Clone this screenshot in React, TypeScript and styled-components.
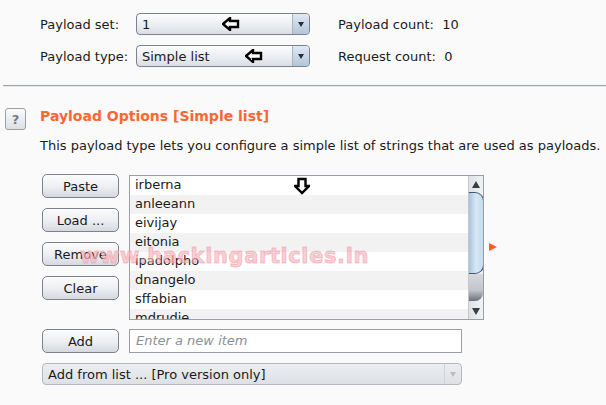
import React from "react";
import styled, { createGlobalStyle } from "styled-components";

const GlobalStyle = createGlobalStyle`
  html, body {
    margin: 0;
    padding: 0;
    background: #fafafa;
  }
  body {
    font-family: "DejaVu Sans", Verdana, sans-serif;
    font-size: 13px;
    color: #1a1a1a;
  }
`;

const Page = styled.div`
  position: relative;
  width: 606px;
  height: 405px;
  overflow: hidden;
  background: #fafafa;
`;

const TopGrid = styled.div`
  display: grid;
  grid-template-columns: 96px 174px auto;
  row-gap: 10px;
  padding: 13px 0 0 40px;
  align-items: center;
`;

const Label = styled.div<{ $count?: boolean }>`
  white-space: nowrap;
  padding-left: ${(p) => (p.$count ? "28px" : "0")};
`;

const Combo = styled.div<{ $disabled?: boolean }>`
  position: relative;
  display: flex;
  align-items: center;
  height: 22px;
  box-sizing: border-box;
  border: 1px solid ${(p) => (p.$disabled ? "#b4b8c2" : "#7c818c")};
  border-radius: 4px;
  background: ${(p) =>
    p.$disabled
      ? "linear-gradient(#eceef1, #dde0e5)"
      : "linear-gradient(#fdfdfe, #e9ecf0 60%, #dadde3)"};
  color: #1a1a1a;
  overflow: hidden;
`;

const ComboText = styled.div`
  flex: 1;
  padding-left: 5px;
  white-space: nowrap;
`;

const ComboArrow = styled.div<{ $disabled?: boolean }>`
  width: 16px;
  align-self: stretch;
  display: flex;
  align-items: center;
  justify-content: center;
  border-left: 1px solid ${(p) => (p.$disabled ? "#d0d3d9" : "#a4b3c6")};
  background: ${(p) =>
    p.$disabled ? "transparent" : "linear-gradient(#e2e9f2, #b3c5da)"};
  &::after {
    content: "";
    border-left: 3.5px solid transparent;
    border-right: 3.5px solid transparent;
    border-top: 5px solid ${(p) => (p.$disabled ? "#b9bcc3" : "#2a2e36")};
  }
`;

const Separator = styled.div`
  margin: 18px 0 0 3px;
  border-top: 1px solid #9fa3ae;
  height: 1px;
  background: #e6e7ea;
`;

const Section = styled.div`
  display: grid;
  grid-template-columns: 35px 1fr;
  padding: 18px 0 0 5px;
`;

const HelpIcon = styled.div`
  width: 21px;
  height: 22px;
  box-sizing: border-box;
  border: 1px solid #9a9ea8;
  border-radius: 3px;
  background: linear-gradient(#fbfbfc, #dcdfe4);
  color: #777b84;
  font-weight: bold;
  font-size: 13px;
  display: flex;
  align-items: center;
  justify-content: center;
  margin-top: 3px;
`;

const Title = styled.div`
  color: #ff6633;
  font-weight: bold;
  font-size: 14px;
  line-height: 18px;
  margin-top: 2px;
`;

const Description = styled.div`
  grid-column: 2;
  margin-top: 8px;
  white-space: nowrap;
`;

const Body = styled.div`
  display: flex;
  gap: 10px;
  padding: 21px 0 0 42px;
`;

const ButtonColumn = styled.div`
  display: flex;
  flex-direction: column;
  gap: 10px;
`;

const Button = styled.div`
  width: 77px;
  height: 24px;
  box-sizing: border-box;
  border: 1px solid #7d818b;
  border-radius: 5px;
  background: linear-gradient(#fcfcfd, #eceef1 55%, #d5d8de);
  display: flex;
  align-items: center;
  justify-content: center;
`;

const ListBox = styled.div`
  position: relative;
  margin-top: 1px;
  width: 355px;
  height: 145px;
  box-sizing: border-box;
  border: 1px solid #9a9ea8;
  background: #fff;
  display: flex;
  overflow: hidden;
`;

const Rows = styled.div`
  flex: 1;
  overflow: hidden;
`;

const Row = styled.div<{ $alt: boolean }>`
  height: 19px;
  line-height: 18px;
  padding-left: 5px;
  background: ${(p) => (p.$alt ? "#f2f2f2" : "#ffffff")};
`;

const ScrollBar = styled.div`
  width: 14px;
  border-left: 1px solid #c4c7cd;
  background: linear-gradient(90deg, #dfe1e5, #f1f2f4);
  display: flex;
  flex-direction: column;
`;

const ScrollBtn = styled.div<{ $down?: boolean }>`
  height: 16px;
  display: flex;
  align-items: center;
  justify-content: center;
  &::after {
    content: "";
    border-left: 4px solid transparent;
    border-right: 4px solid transparent;
    ${(p) =>
      p.$down
        ? "border-top: 7px solid #3a3d44;"
        : "border-bottom: 7px solid #3a3d44;"}
  }
`;

const Thumb = styled.div`
  height: 82px;
  margin-right: -1px;
  box-sizing: border-box;
  border: 1px solid #3f5a78;
  border-left: none;
  border-radius: 0 9px 9px 0;
  background: linear-gradient(90deg, #a8c3dd, #d8e8f5 50%, #c4dbee);
`;

const Track = styled.div`
  flex: 1;
  background: linear-gradient(#d6d8dc, #c2c5cb 60%, #6c6f76);
  border-radius: 0 0 8px 0;
  margin-bottom: 2px;
`;

const Marker = styled.div`
  align-self: center;
  margin-left: -5px;
  margin-top: -1px;
  width: 0;
  height: 0;
  border-top: 4px solid transparent;
  border-bottom: 4px solid transparent;
  border-left: 8px solid #ff5c26;
`;

const AddRow = styled.div`
  display: flex;
  gap: 10px;
  padding: 9px 0 0 42px;
`;

const Input = styled.div`
  width: 333px;
  height: 24px;
  box-sizing: border-box;
  border: 1px solid #9a9ea8;
  background: #fff;
  color: #8b8f97;
  font-style: italic;
  padding-left: 6px;
  line-height: 22px;
`;

const FromList = styled.div`
  padding: 10px 0 0 42px;
  width: 462px;
  box-sizing: border-box;
`;

const Watermark = styled.div`
  position: absolute;
  left: 80px;
  top: 244px;
  font-family: "DejaVu Sans", Verdana, sans-serif;
  font-weight: bold;
  font-size: 21px;
  color: rgba(248, 186, 194, 0.7);
  -webkit-text-stroke: 1px rgba(240, 140, 152, 0.45);
  pointer-events: none;
  letter-spacing: 0.6px;
`;

const Pointer = styled.svg`
  position: absolute;
`;

const LeftArrow = ({ x, y }: { x: number; y: number }) => (
  <Pointer width="18" height="14" viewBox="0 0 18 14" style={{ left: x, top: y }}>
    <path
      d="M1 7 L8 1 L8 4 L16 4 L16 10 L8 10 L8 13 Z"
      fill="#fff"
      stroke="#000"
      strokeWidth="2.4"
      strokeLinejoin="miter"
    />
  </Pointer>
);

const DownArrow = ({ x, y }: { x: number; y: number }) => (
  <Pointer width="16" height="18" viewBox="0 0 16 18" style={{ left: x, top: y }}>
    <path
      d="M8 16 L1 9 L4.5 9 L4.5 2 L11.5 2 L11.5 9 L15 9 Z"
      fill="#fff"
      stroke="#000"
      strokeWidth="2.4"
    />
  </Pointer>
);

const items = [
  "irberna",
  "anleeann",
  "eivijay",
  "eitonia",
  "ipadolpho",
  "dnangelo",
  "sffabian",
  "mdrudie",
];

export default function App() {
  return (
    <Page>
      <GlobalStyle />
      <TopGrid>
        <Label>Payload set:</Label>
        <Combo>
          <ComboText>1</ComboText>
          <ComboArrow />
        </Combo>
        <Label $count>Payload count:&nbsp; 10</Label>
        <Label>Payload type:</Label>
        <Combo>
          <ComboText>Simple list</ComboText>
          <ComboArrow />
        </Combo>
        <Label $count>Request count:&nbsp; 0</Label>
      </TopGrid>
      <Separator />
      <Section>
        <HelpIcon>?</HelpIcon>
        <Title>Payload Options [Simple list]</Title>
        <Description>
          This payload type lets you configure a simple list of strings that are used as payloads.
        </Description>
      </Section>
      <Body>
        <ButtonColumn>
          <Button>Paste</Button>
          <Button>Load ...</Button>
          <Button>Remove</Button>
          <Button>Clear</Button>
        </ButtonColumn>
        <ListBox>
          <Rows>
            {items.map((it, i) => (
              <Row key={it} $alt={i % 2 === 1}>
                {it}
              </Row>
            ))}
          </Rows>
          <ScrollBar>
            <ScrollBtn />
            <Thumb />
            <Track />
            <ScrollBtn $down />
          </ScrollBar>
        </ListBox>
        <Marker />
      </Body>
      <AddRow>
        <Button>Add</Button>
        <Input>Enter a new item</Input>
      </AddRow>
      <FromList>
        <Combo $disabled>
          <ComboText>Add from list ... [Pro version only]</ComboText>
          <ComboArrow $disabled />
        </Combo>
      </FromList>
      <Watermark>www.hackingarticles.in</Watermark>
      <LeftArrow x={222} y={17} />
      <LeftArrow x={245} y={49} />
      <DownArrow x={294} y={177} />
    </Page>
  );
}
